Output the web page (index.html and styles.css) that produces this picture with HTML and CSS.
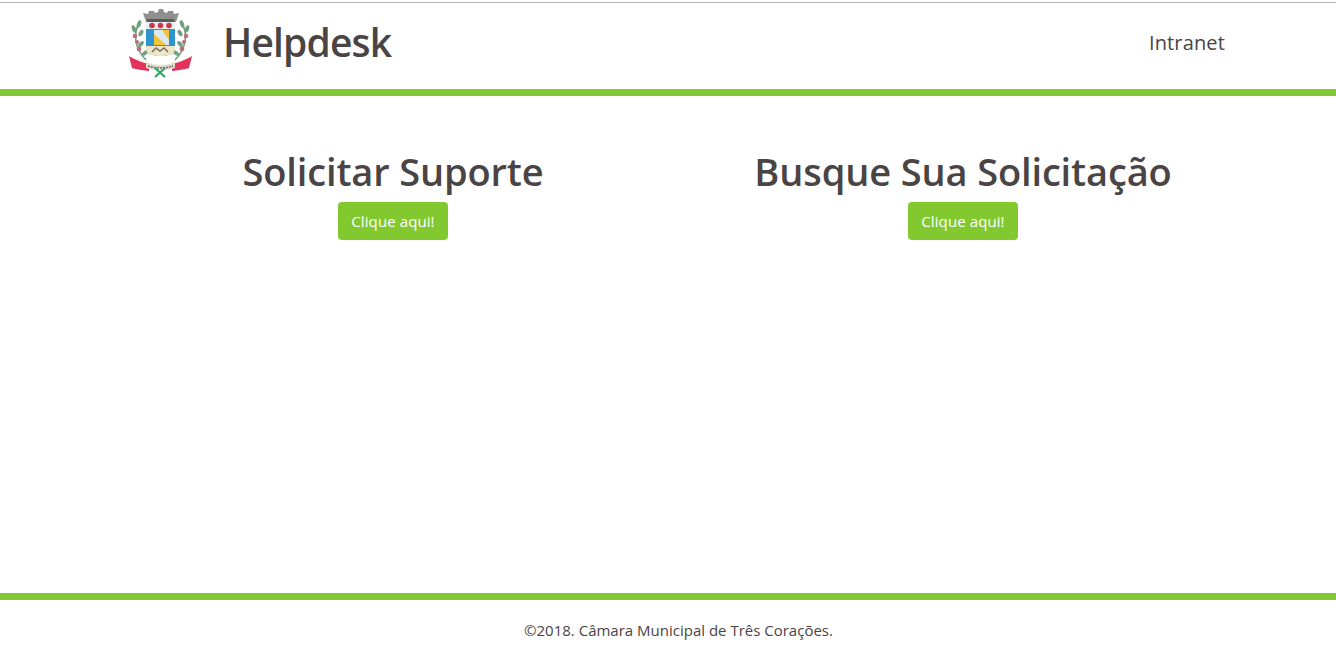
FILE: index.html
```html
<!DOCTYPE html>
<html lang="pt-BR">
<head>
<meta charset="utf-8">
<title>Helpdesk</title>
<link rel="stylesheet" href="styles.css">
</head>
<body>
<header class="topbar">
  <div class="brand">
    <svg class="logo" viewBox="128 8 65 70" width="65" height="70" aria-label="Brasão">
      <g fill="none" stroke="#6c9c76" stroke-width="1.500">
        <path d="M140 22C133 32 134 48 146 60"/>
        <path d="M181 22C188 32 187 48 175 60"/>
      </g>
      <g fill="#6fa27c">
        <ellipse cx="139" cy="24" rx="2" ry="4" transform="rotate(20 139 24)"/>
        <ellipse cx="134" cy="29" rx="2" ry="4" transform="rotate(-20 134 29)"/>
        <ellipse cx="141" cy="33" rx="2" ry="3.500" transform="rotate(30 141 33)"/>
        <ellipse cx="141" cy="44" rx="2" ry="3.500" transform="rotate(40 141 44)"/>
        <ellipse cx="145" cy="53" rx="2" ry="3.500" transform="rotate(50 145 53)"/>
        <ellipse cx="182" cy="24" rx="2" ry="4" transform="rotate(-20 182 24)"/>
        <ellipse cx="187" cy="29" rx="2" ry="4" transform="rotate(20 187 29)"/>
        <ellipse cx="180" cy="33" rx="2" ry="3.500" transform="rotate(-30 180 33)"/>
        <ellipse cx="180" cy="44" rx="2" ry="3.500" transform="rotate(-40 180 44)"/>
        <ellipse cx="176" cy="53" rx="2" ry="3.500" transform="rotate(-50 176 53)"/>
      </g>
      <g fill="#b8707c">
        <circle cx="135" cy="36" r="2.300"/><circle cx="137" cy="42" r="2.100"/><circle cx="139" cy="49" r="2.400"/>
        <circle cx="186" cy="36" r="2.300"/><circle cx="184" cy="42" r="2.100"/><circle cx="182" cy="49" r="2.400"/>
      </g>
      <path d="M143 13l5 1 1-3h5l1 2 3-1 1-3h4l1 3 3 1 1-2h5l1 3 5-1-3 9h-30z" fill="#8f8f8f"/>
      <rect x="147" y="19" width="27" height="3" fill="#5a5a5a"/>
      <path d="M146 22h29v27c0 5-6 7-14.500 7s-14.500-2-14.500-7z" fill="#2c95d0"/>
      <path d="M146 22h29v7h-29z" fill="#e8eef0"/>
      <circle cx="152" cy="25.500" r="2.800" fill="#c93a48"/><circle cx="160.500" cy="25.500" r="2.800" fill="#c93a48"/><circle cx="169" cy="25.500" r="2.800" fill="#c93a48"/>
      <path d="M154 30h15v15h-15z" fill="#f2c43d"/>
      <path d="M157 30h5l7 10v5h-3l-12-11v-4z" fill="#dbe9ee"/>
      <path d="M146 46h29v3c0 5-6 7-14.500 7s-14.500-2-14.500-7z" fill="#efe6c4"/>
      <path d="M152 52l4-4 4 3 4-3 4 4" fill="none" stroke="#6f6f6f" stroke-width="1.500"/>
      <path d="M129 56C136 60 141 62 149 64V71C141 70 135 69 132 68Z" fill="#e3335a"/>
      <path d="M192 56C185 60 180 62 172 64V71C180 70 186 69 189 68Z" fill="#e3335a"/>
      <path d="M146 62C155 66 166 66 175 62V68C166 71 155 71 146 68Z" fill="#e2dccf"/>
      <path d="M148 66C156 68.500 165 68.500 173 66" fill="none" stroke="#6b6b6b" stroke-width="1.500" stroke-dasharray="2 1"/>
      <path d="M155 68l10 9M165 68l-10 9" stroke="#2fa566" stroke-width="2.200"/>
    </svg>
    <span class="site-name">Helpdesk</span>
  </div>
  <a class="nav-link" href="#">Intranet</a>
</header>
<main class="content">
  <section class="panel">
    <h1 class="panel-title">Solicitar Suporte</h1>
    <a class="btn" href="#">Clique aqui!</a>
  </section>
  <section class="panel">
    <h1 class="panel-title">Busque Sua Solicitação</h1>
    <a class="btn" href="#">Clique aqui!</a>
  </section>
</main>
<footer class="footer">©2018. Câmara Municipal de Três Corações.</footer>
</body>
</html>
```
FILE: styles.css
```css
* { box-sizing: border-box; }
html, body { height: 100%; }
body {
  margin: 0;
  height: 659px;
  overflow: hidden;
  display: flex;
  flex-direction: column;
  background: #fff;
  color: #4a4444;
  font-family: "Open Sans", "Noto Sans", "Liberation Sans", sans-serif;
}
.topbar {
  height: 94px;
  margin-top: 2px;
  border-top: 1px solid #b5b5b5;
  border-bottom: 7px solid #82c535;
  display: flex;
  align-items: flex-start;
  justify-content: space-between;
  padding: 5px 111px 0 128px;
  flex: none;
}
.brand { display: flex; align-items: flex-start; gap: 30px; }
.logo { display: block; }
.site-name { margin-top: 14px; font-size: 39px; font-weight: 600; letter-spacing: -0.85px; line-height: 1; }
.nav-link { margin-top: 21px; color: #4a4444; text-decoration: none; font-size: 20px; letter-spacing: 0.15px; }
.content {
  flex: 1;
  display: grid;
  grid-template-columns: 570px 570px;
  padding: 51px 0 0 108px;
  align-content: start;
}
.panel { display: flex; flex-direction: column; align-items: center; }
.panel-title { margin: 0 0 7px; font-size: 38px; font-weight: 600; line-height: 48px; letter-spacing: -0.13px; }
.btn {
  display: block;
  width: 110px;
  height: 38px;
  line-height: 38px;
  text-align: center;
  background: #82c92f;
  color: #fff;
  border-radius: 4px;
  text-decoration: none;
  font-size: 15px;
  letter-spacing: 0.1px;
}
.footer {
  flex: none;
  height: 66px;
  border-top: 7px solid #82c535;
  text-align: center;
  font-size: 15px;
  padding: 20px 0 0 21px;
  line-height: 20px;
}
```
